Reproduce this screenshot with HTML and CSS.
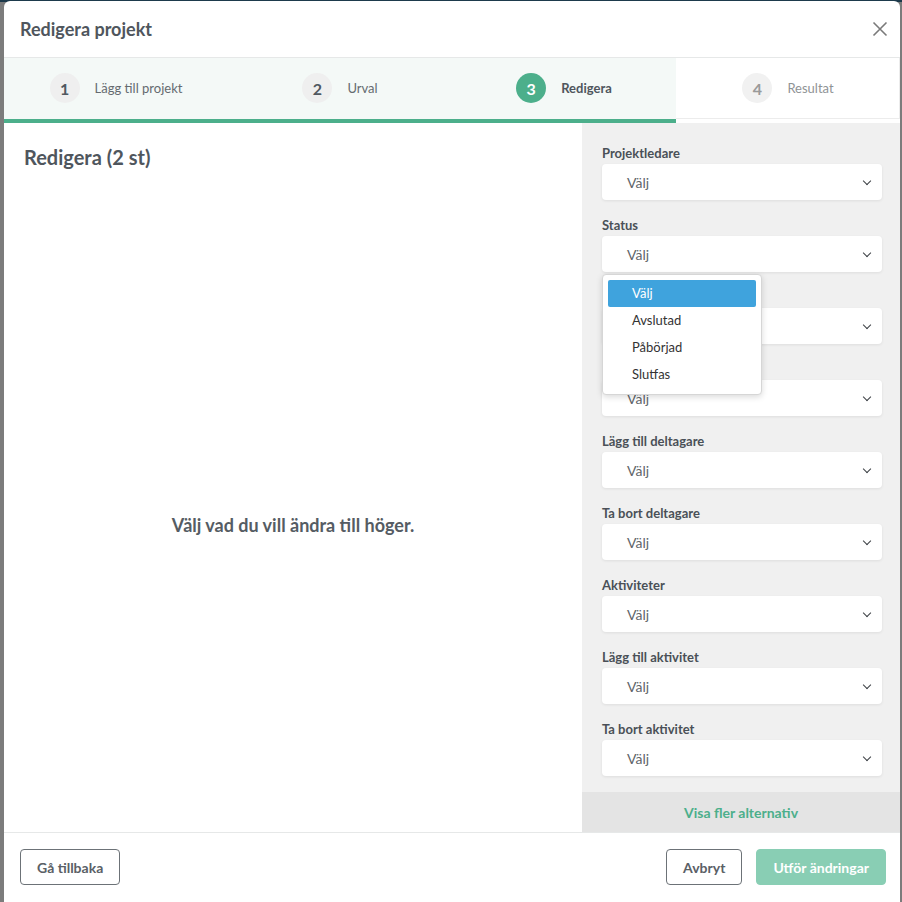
FILE: index.html
```html
<!DOCTYPE html>
<html lang="sv">
<head>
    <meta charset="UTF-8">
    <meta name="viewport" content="width=device-width, initial-scale=1.0">
    <title>Redigera projekt</title>
    <link rel="stylesheet" href="styles.css">
</head>
<body>
    <div class="backdrop-bar"></div>
    <div class="modal">
        <!-- Header -->
        <div class="modal-header">
            <h1>Redigera projekt</h1>
            <button class="close" aria-label="Stäng">
                <svg width="16" height="16" viewBox="0 0 16 16"><path d="M1.5 1.5 L14.5 14.5 M14.5 1.5 L1.5 14.5" stroke="#7a7a7a" stroke-width="1.6" fill="none"/></svg>
            </button>
        </div>

        <!-- Steps -->
        <div class="stepper">
            <div class="step done"><span class="num">1</span><span class="label">Lägg till projekt</span></div>
            <div class="step done"><span class="num">2</span><span class="label">Urval</span></div>
            <div class="step active"><span class="num">3</span><span class="label">Redigera</span></div>
            <div class="step todo"><span class="num">4</span><span class="label">Resultat</span></div>
        </div>

        <div class="modal-body">
            <div class="edit-panel">
                <h2>Redigera (2 st)</h2>
                <div class="empty">Välj vad du vill ändra till höger.</div>
            </div>

            <div class="options-panel">
                <div class="fields">
                    <div class="field">
                        <label>Projektledare</label>
                        <div class="select">Välj</div>
                    </div>
                    <div class="field">
                        <label>Status</label>
                        <div class="select">Välj</div>
                        <ul class="dropdown">
                            <li class="selected">Välj</li>
                            <li>Avslutad</li>
                            <li>Påbörjad</li>
                            <li>Slutfas</li>
                        </ul>
                    </div>
                    <div class="field">
                        <label>Projekttyp</label>
                        <div class="select">Välj</div>
                    </div>
                    <div class="field">
                        <label>Prioritet</label>
                        <div class="select">Välj</div>
                    </div>
                    <div class="field">
                        <label>Lägg till deltagare</label>
                        <div class="select">Välj</div>
                    </div>
                    <div class="field">
                        <label>Ta bort deltagare</label>
                        <div class="select">Välj</div>
                    </div>
                    <div class="field">
                        <label>Aktiviteter</label>
                        <div class="select">Välj</div>
                    </div>
                    <div class="field">
                        <label>Lägg till aktivitet</label>
                        <div class="select">Välj</div>
                    </div>
                    <div class="field">
                        <label>Ta bort aktivitet</label>
                        <div class="select">Välj</div>
                    </div>
                </div>
                <div class="more">Visa fler alternativ</div>
            </div>
        </div>

        <!-- Footer -->
        <div class="modal-footer">
            <button class="btn">Gå tillbaka</button>
            <div class="footer-right">
                <button class="btn">Avbryt</button>
                <button class="btn primary">Utför ändringar</button>
            </div>
        </div>
    </div>
</body>
</html>
```

FILE: styles.css
```css
body {
    margin: 0;
    padding: 0;
    background-color: #7c7c7c;
    font-family: Lato, "Open Sans", Arial, sans-serif;
    color: #4f565d;
    overflow: hidden;
}

.backdrop-bar {
    position: absolute;
    top: 0;
    left: 0;
    right: 0;
    height: 2px;
    background-color: #1d3a4c;
}

.modal {
    position: relative;
    margin: 1px 2px 0 4px;
    height: 901px;
    background-color: #fff;
    border-radius: 6px 6px 0 0;
    overflow: hidden;
    display: flex;
    flex-direction: column;
}

/* Header */
.modal-header {
    height: 56px;
    display: flex;
    align-items: center;
    justify-content: space-between;
    padding: 0 12px 0 16px;
    border-bottom: 1px solid #e6e8e8;
}

    .modal-header h1 {
        margin: 0;
        font-size: 18px;
        font-weight: 700;
        color: #4f565d;
    }

    .modal-header .close {
        border: none;
        background: none;
        padding: 0;
        width: 16px;
        height: 16px;
        cursor: pointer;
    }

/* Stepper */
.stepper {
    display: flex;
}

.step {
    flex: 1;
    height: 60px;
    padding-bottom: 1px;
    display: flex;
    align-items: center;
    justify-content: center;
    gap: 15px;
    background-color: #f4f9f7;
    border-bottom: 4px solid #4caf8b;
}

    .step .num {
        width: 30px;
        height: 30px;
        border-radius: 50%;
        background-color: #efefef;
        color: #505860;
        font-size: 16px;
        font-weight: 700;
        display: flex;
        align-items: center;
        justify-content: center;
    }

    .step .label {
        font-size: 13px;
        color: #656b70;
    }

    .step.active .num {
        background-color: #4caf8b;
        color: #fff;
    }

    .step.active .label {
        color: #4f565d;
        font-weight: 700;
    }

    .step.todo {
        background-color: #fff;
        border-bottom-color: #fff;
        box-shadow: inset 0 -1px 0 #ececec, inset -1px 0 0 #ececec;
    }

        .step.todo .num {
            color: #9a9a9a;
            background-color: #f1f1f1;
        }

        .step.todo .label {
            color: #8f9396;
        }

/* Body */
.modal-body {
    display: flex;
    height: 709px;
}

.edit-panel {
    flex: 1;
    display: flex;
    flex-direction: column;
    padding: 20px 20px 0 20px;
}

    .edit-panel h2 {
        margin: 0;
        font-size: 20px;
        font-weight: 700;
        line-height: 28px;
        color: #4f565d;
    }

.empty {
    flex: 1;
    display: flex;
    align-items: center;
    justify-content: center;
    padding-top: 47px;
    font-size: 18px;
    font-weight: 700;
    color: #555c63;
}

.options-panel {
    width: 318px;
    background-color: #f0f0f0;
    display: flex;
    flex-direction: column;
}

.fields {
    flex: 1;
    padding: 22px 18px 0 20px;
}

.field {
    position: relative;
    margin-bottom: 17px;
}

    .field label {
        display: block;
        font-size: 13px;
        font-weight: 700;
        color: #4a5057;
        line-height: 16px;
        margin-bottom: 3px;
    }

.select {
    height: 36px;
    background-color: #fff;
    border-radius: 4px;
    box-shadow: 0 1px 3px rgba(0, 0, 0, 0.08);
    display: flex;
    align-items: center;
    padding-left: 25px;
    font-size: 14px;
    color: #5f656a;
    position: relative;
}

    .select::after {
        content: "";
        position: absolute;
        right: 12px;
        top: 14px;
        width: 5px;
        height: 5px;
        border-right: 1.5px solid #3b3f44;
        border-bottom: 1.5px solid #3b3f44;
        transform: rotate(45deg);
    }

.dropdown {
    position: absolute;
    top: 57px;
    left: 0;
    width: 160px;
    margin: 0;
    padding: 5px 5px 6px 5px;
    list-style: none;
    background-color: #fff;
    border: 1px solid #d6d6d6;
    border-radius: 4px;
    box-shadow: 0 2px 6px rgba(0, 0, 0, 0.15);
    box-sizing: border-box;
    z-index: 10;
}

    .dropdown li {
        height: 27px;
        line-height: 27px;
        padding-left: 24px;
        font-size: 13px;
        color: #333;
        border-radius: 2px;
    }

        .dropdown li.selected {
            background-color: #3fa3dd;
            color: #fff;
        }

.more {
    height: 40px;
    margin-top: -1px;
    background-color: #e4e4e4;
    display: flex;
    align-items: center;
    justify-content: center;
    font-size: 14px;
    font-weight: 700;
    color: #4caf8b;
}

/* Footer */
.modal-footer {
    border-top: 1px solid #e6e8e8;
    padding: 16px 14px 16px 16px;
    display: flex;
    justify-content: space-between;
}

.footer-right {
    display: flex;
    gap: 14px;
}

.btn {
    height: 36px;
    padding: 0 16px;
    font-family: inherit;
    font-size: 14px;
    font-weight: 700;
    color: #5a6066;
    background-color: #fff;
    border: 1px solid #6c7277;
    border-radius: 4px;
    cursor: pointer;
}

    .btn.primary {
        background-color: #89ceb4;
        border-color: #89ceb4;
        color: #fff;
    }
```
